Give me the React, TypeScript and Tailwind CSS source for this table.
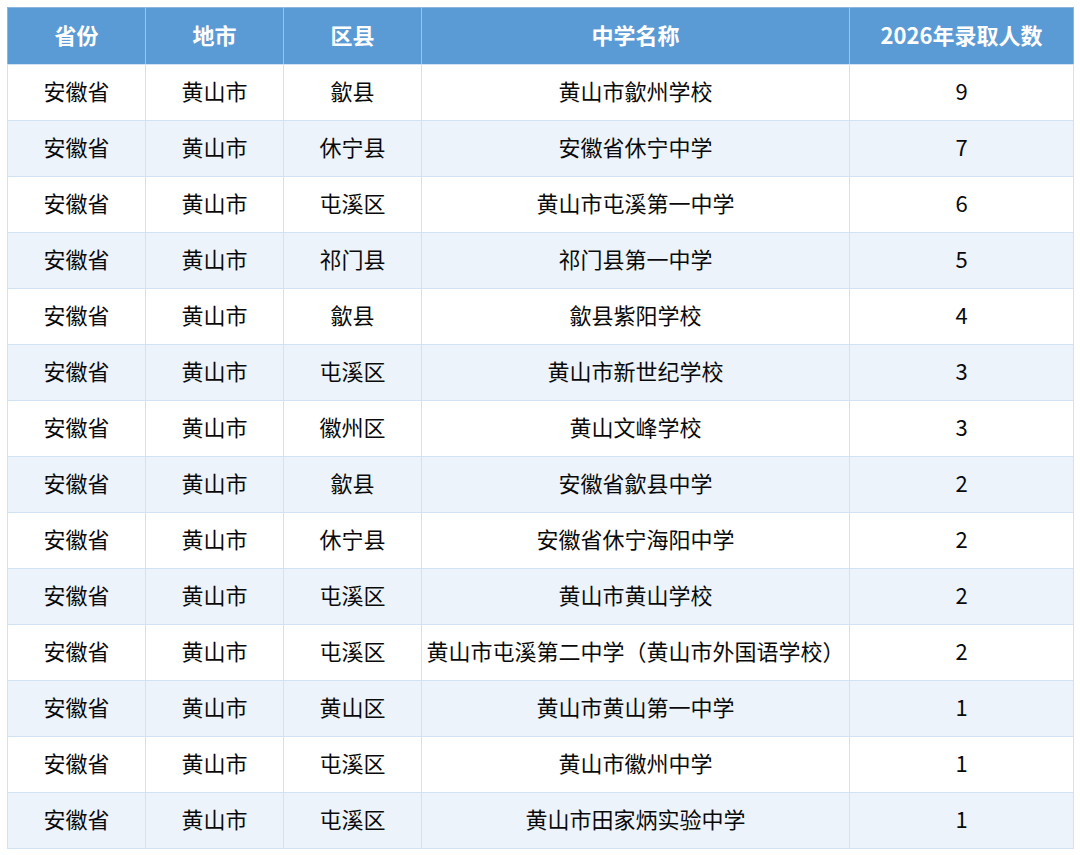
import React from "react";

const rows: [string, string, string, string, string][] = [
  ["安徽省", "黄山市", "歙县", "黄山市歙州学校", "9"],
  ["安徽省", "黄山市", "休宁县", "安徽省休宁中学", "7"],
  ["安徽省", "黄山市", "屯溪区", "黄山市屯溪第一中学", "6"],
  ["安徽省", "黄山市", "祁门县", "祁门县第一中学", "5"],
  ["安徽省", "黄山市", "歙县", "歙县紫阳学校", "4"],
  ["安徽省", "黄山市", "屯溪区", "黄山市新世纪学校", "3"],
  ["安徽省", "黄山市", "徽州区", "黄山文峰学校", "3"],
  ["安徽省", "黄山市", "歙县", "安徽省歙县中学", "2"],
  ["安徽省", "黄山市", "休宁县", "安徽省休宁海阳中学", "2"],
  ["安徽省", "黄山市", "屯溪区", "黄山市黄山学校", "2"],
  ["安徽省", "黄山市", "屯溪区", "黄山市屯溪第二中学（黄山市外国语学校）", "2"],
  ["安徽省", "黄山市", "黄山区", "黄山市黄山第一中学", "1"],
  ["安徽省", "黄山市", "屯溪区", "黄山市徽州中学", "1"],
  ["安徽省", "黄山市", "屯溪区", "黄山市田家炳实验中学", "1"],
];

const headers = ["省份", "地市", "区县", "中学名称", "2026年录取人数"];
const widths = ["w-[138px]", "w-[138px]", "w-[138px]", "w-[428px]", "w-[224px]"];

export default function App() {
  return (
    <div className="w-[1080px] h-[855px] bg-white pt-[7px] pl-[7px] font-['Noto_Sans_CJK_SC','Noto_Sans',sans-serif]">
      <table className="w-[1066px] border-collapse table-fixed border border-[#8db6df]">
        <thead>
          <tr className="bg-[#5b9bd5]">
            {headers.map((h, i) => (
              <th
                key={i}
                className={`${widths[i]} h-[57px] p-0 pb-[4px] text-center text-[22px] font-bold text-white border-r border-[#9cc2e8] last:border-r-0 border-b border-b-[#d0e2f4]`}
              >
                {h}
              </th>
            ))}
          </tr>
        </thead>
        <tbody>
          {rows.map((r, ri) => (
            <tr key={ri} className={ri % 2 === 1 ? "bg-[#ecf3fb]" : "bg-white"}>
              {r.map((c, ci) => (
                <td
                  key={ci}
                  className="h-[56px] p-0 pb-[4px] text-center text-[22px] text-[#0a0a0a] border border-[#d0e2f4] whitespace-nowrap"
                >
                  {c}
                </td>
              ))}
            </tr>
          ))}
        </tbody>
      </table>
    </div>
  );
}
